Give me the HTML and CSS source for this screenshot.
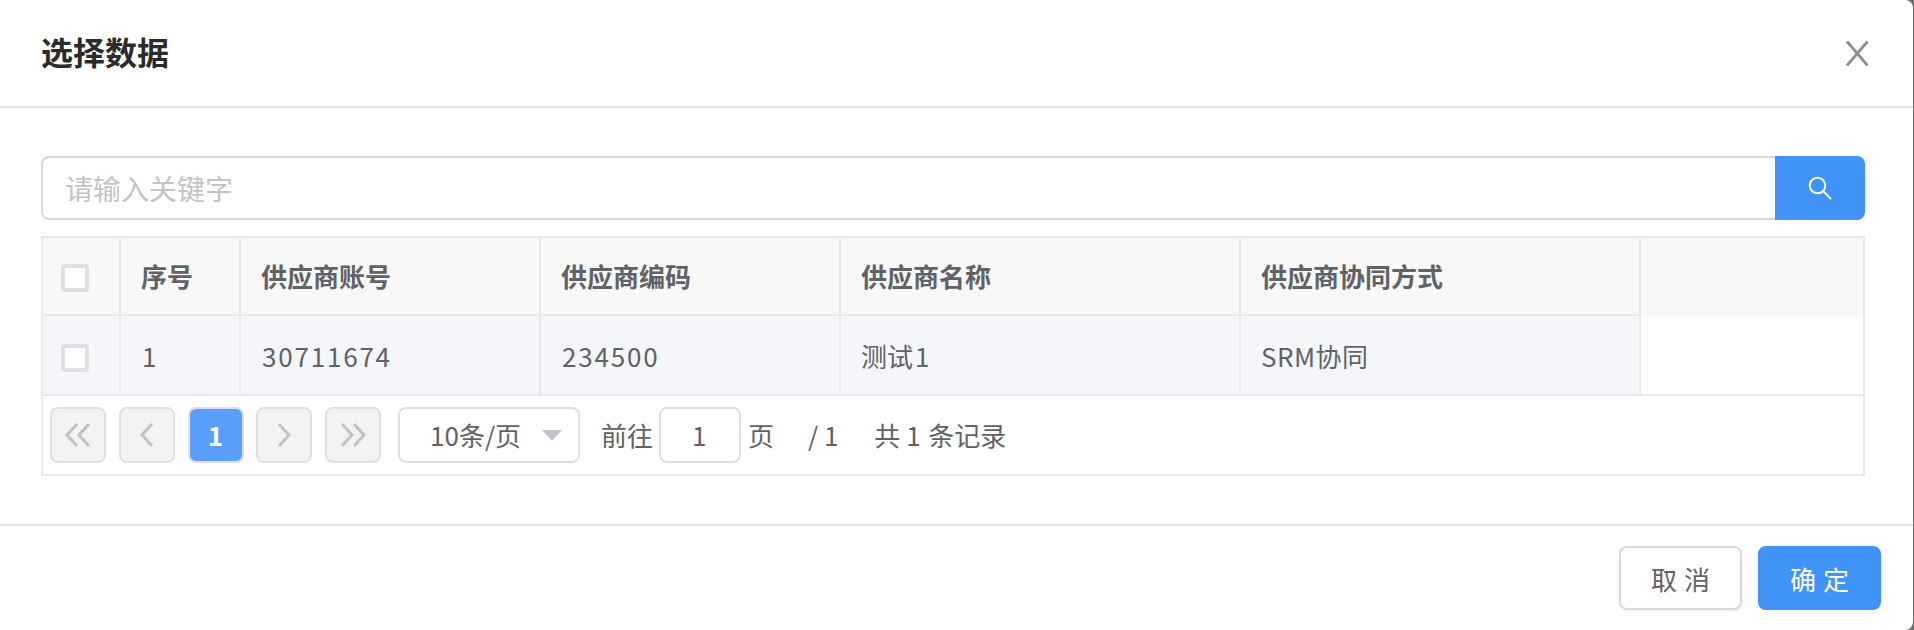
FILE: index.html
```html
<!DOCTYPE html>
<html lang="zh-CN">
<head>
    <meta charset="UTF-8">
    <title>选择数据</title>
    <link rel="stylesheet" href="styles.css">
</head>
<body>
    <div class="dialog">
        <div class="dialog-header">
            <h2>选择数据</h2>
            <svg class="close-icon" width="24" height="26" viewBox="0 0 24 26">
                <path d="M2 1.5 22.5 25.5M22.5 1.5 2 25.5" fill="none" stroke="#8f8f8f" stroke-width="2.8"/>
            </svg>
        </div>

        <div class="dialog-body">
            <div class="search-bar">
                <input class="search-input" type="text" placeholder="请输入关键字">
                <button class="search-btn">
                    <svg width="24" height="24" viewBox="0 0 24 24">
                        <circle cx="9.5" cy="9.5" r="7.8" fill="none" stroke="#fff" stroke-width="2"/>
                        <path d="M15 15 23 23" fill="none" stroke="#fff" stroke-width="2"/>
                    </svg>
                </button>
            </div>

            <div class="grid-box">
                <table class="grid">
                    <colgroup>
                        <col class="col-check">
                        <col class="col-index">
                        <col class="col-wide">
                        <col class="col-wide">
                        <col class="col-wider">
                        <col class="col-wider">
                        <col>
                    </colgroup>
                    <thead>
                        <tr>
                            <th class="cell-check"><span class="checkbox"></span></th>
                            <th>序号</th>
                            <th>供应商账号</th>
                            <th>供应商编码</th>
                            <th>供应商名称</th>
                            <th>供应商协同方式</th>
                            <th class="filler"></th>
                        </tr>
                    </thead>
                    <tbody>
                        <tr>
                            <td class="cell-check"><span class="checkbox"></span></td>
                            <td class="cell-num"><span class="num">1</span></td>
                            <td class="cell-num"><span class="num">30711674</span></td>
                            <td class="cell-num"><span class="num">234500</span></td>
                            <td>测试<span class="num num-tail">1</span></td>
                            <td class="cell-mixed">SRM协同</td>
                            <td class="filler"></td>
                        </tr>
                    </tbody>
                </table>

                <div class="pager">
                    <div class="pager-btns">
                        <span class="page-btn">
                            <svg width="26" height="24" viewBox="0 0 26 24"><path d="M12 1 2 12 12 23M24 1 14 12 24 23" class="chevron"/></svg>
                        </span>
                        <span class="page-btn">
                            <svg width="14" height="24" viewBox="0 0 14 24"><path d="M12 1 2 12 12 23" class="chevron"/></svg>
                        </span>
                        <span class="page-btn active">1</span>
                        <span class="page-btn">
                            <svg width="14" height="24" viewBox="0 0 14 24"><path d="M2 1 12 12 2 23" class="chevron"/></svg>
                        </span>
                        <span class="page-btn">
                            <svg width="26" height="24" viewBox="0 0 26 24"><path d="M2 1 12 12 2 23M14 1 24 12 14 23" class="chevron"/></svg>
                        </span>
                    </div>
                    <div class="size-select">
                        <span class="size-label"><span class="num">10</span>条/页</span>
                        <i class="caret"></i>
                    </div>
                    <span class="goto">前往</span>
                    <span class="page-input num">1</span>
                    <span class="goto-unit">页</span>
                    <span class="page-total">/ <span class="num">1</span></span>
                    <span class="record-total">共 <span class="num">1</span> 条记录</span>
                </div>
            </div>
        </div>

        <div class="dialog-footer">
            <button class="btn">取 消</button>
            <button class="btn btn-primary">确 定</button>
        </div>
    </div>
</body>
</html>
```

FILE: styles.css
```css
* {
    box-sizing: border-box;
}
html, body {
    height: 100%;
}
body {
    margin: 0;
    background-color: #6f6f6f;
    font-family: "Noto Sans CJK SC", "Noto Sans", sans-serif;
    color: #606266;
    overflow: hidden;
}
.dialog {
    width: 1913px;
    height: 630px;
    background-color: #fff;
    border-radius: 0 8px 8px 0;
}
.dialog-header {
    height: 108px;
    padding: 0 44px 0 41px;
    border-bottom: 2px solid #e6e6e8;
    display: flex;
    align-items: center;
    justify-content: space-between;
}
.dialog-header h2 {
    margin: 0 0 4px;
    font-size: 32px;
    font-weight: 600;
    color: #2b2b2b;
}
.close-icon {
    display: block;
}
.dialog-body {
    padding: 48px 48px 0 41px;
    height: 418px;
    border-bottom: 2px solid #e6e6e8;
}
.search-bar {
    display: flex;
    height: 64px;
}
.search-input {
    flex: 1;
    min-width: 0;
    height: 64px;
    padding: 0 22px;
    border: 2px solid #d9d9d9;
    border-right: 0;
    border-radius: 8px 0 0 8px;
    font-family: inherit;
    font-size: 28px;
    outline: none;
}
.search-input::placeholder {
    color: #c4c4c4;
}
.search-btn {
    width: 90px;
    padding: 0;
    border: 0;
    border-radius: 0 8px 8px 0;
    background-color: #4293f8;
    box-shadow: 0 2px 4px rgba(0,0,0,0.05);
    display: flex;
    align-items: center;
    justify-content: center;
}
.grid-box {
    margin-top: 16px;
    border: 2px solid #e9e9eb;
}
.grid {
    width: 100%;
    table-layout: fixed;
    border-collapse: separate;
    border-spacing: 0;
}
.col-check {
    width: 78px;
}
.col-index {
    width: 120px;
}
.col-wide {
    width: 300px;
}
.col-wider {
    width: 400px;
}
.grid th, .grid td {
    padding: 0 20px;
    border-right: 2px solid #e9e9eb;
    border-bottom: 2px solid #e9e9eb;
    font-size: 26px;
    text-align: left;
}
.grid th {
    height: 78px;
    padding-bottom: 2px;
    font-weight: 700;
    background-color: #f8f8f8;
}
.grid td {
    height: 80px;
    font-weight: 400;
    background-color: #f5f6fa;
}
.grid td.cell-num {
    padding-left: 21px;
}
.grid td.cell-mixed {
    letter-spacing: 0.5px;
}
.grid th.cell-check {
    padding: 4px 0 0 18px;
}
.grid td.cell-check {
    padding: 6px 0 0 18px;
}
.grid th.filler {
    border-right: 0;
    border-bottom: 0;
}
.grid td.filler {
    border-right: 0;
    background-color: #fff;
}
.num {
    letter-spacing: 1.8px;
}
.num-tail {
    margin-left: 2px;
}
.checkbox {
    display: block;
    width: 28px;
    height: 28px;
    border: 4px solid #dfe0e6;
    border-radius: 4px;
    background-color: #fff;
}
.pager {
    height: 78px;
    padding-left: 7px;
    display: flex;
    align-items: center;
    font-size: 26px;
}
.pager-btns {
    display: flex;
    gap: 12.75px;
}
.page-btn {
    width: 56px;
    height: 56px;
    border: 2px solid #dfe0e6;
    border-radius: 8px;
    background-color: #f3f3f3;
    display: flex;
    align-items: center;
    justify-content: center;
}
.page-btn.active {
    padding-bottom: 2px;
    background-color: #5a9ffb;
    color: #fff;
    font-weight: 700;
}
.chevron {
    fill: none;
    stroke: #c2c2c2;
    stroke-width: 3;
}
.size-select {
    width: 182px;
    height: 56px;
    margin-left: 17px;
    padding: 0 16px 0 30px;
    border: 2px solid #dfe0e6;
    border-radius: 8px;
    display: flex;
    align-items: center;
    justify-content: space-between;
}
.size-label .num {
    letter-spacing: 0;
}
.size-label, .goto, .goto-unit, .page-total, .record-total, .page-input {
    padding-bottom: 2px;
}
.caret {
    width: 0;
    height: 0;
    border-left: 10px solid transparent;
    border-right: 10px solid transparent;
    border-top: 11px solid #c0c4cc;
}
.goto {
    margin-left: 21px;
}
.page-input {
    width: 82px;
    height: 56px;
    margin-left: 6px;
    border: 2px solid #dfe0e6;
    border-radius: 8px;
    display: flex;
    align-items: center;
    justify-content: center;
}
.goto-unit {
    margin-left: 7px;
}
.page-total {
    margin-left: 34px;
}
.record-total {
    margin-left: 34px;
}
.dialog-footer {
    padding: 20px 32px 0 0;
    display: flex;
    justify-content: flex-end;
    gap: 16px;
}
.btn {
    width: 123px;
    height: 64px;
    padding: 0;
    border: 2px solid #d9d9d9;
    border-radius: 8px;
    background-color: #fff;
    color: #606266;
    font-family: inherit;
    font-size: 26px;
    word-spacing: 1px;
    box-shadow: 0 2px 4px rgba(0,0,0,0.05);
}
.btn-primary {
    border-color: #4293f8;
    background-color: #4293f8;
    color: #fff;
}
```
